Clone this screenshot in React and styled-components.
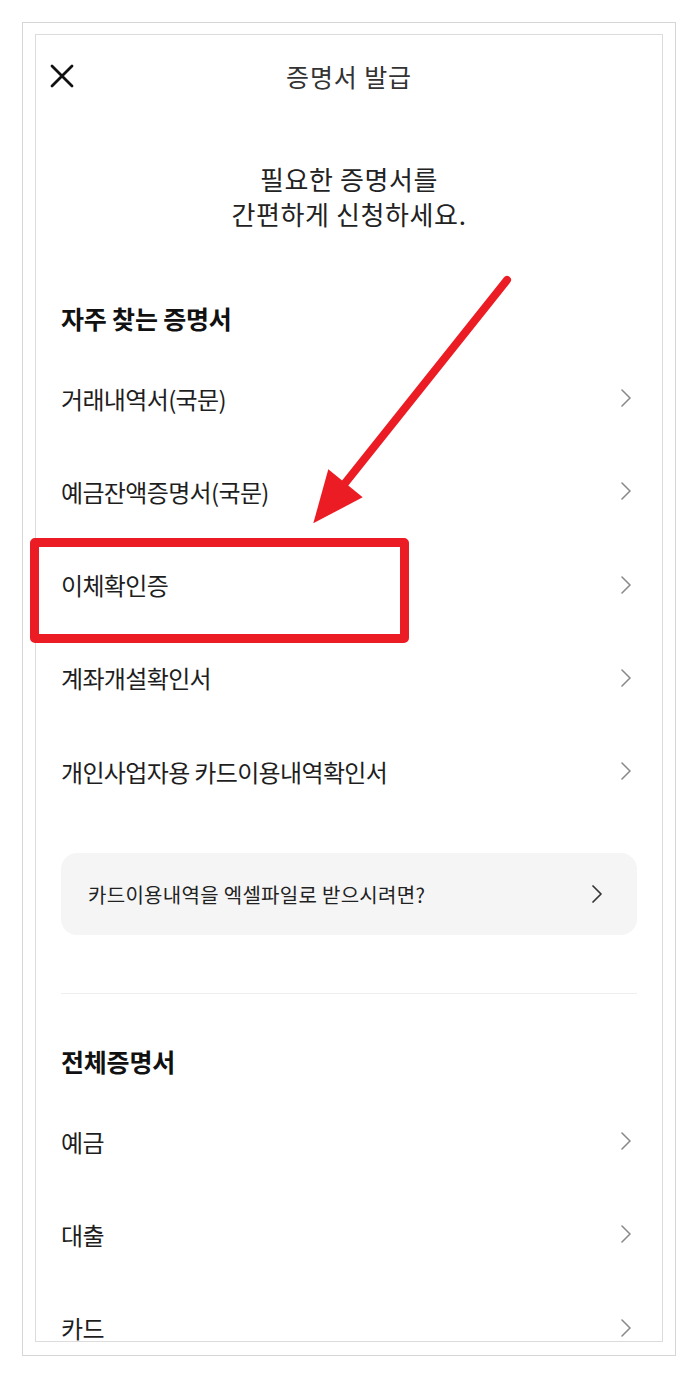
import React from "react";
import styled, { createGlobalStyle } from "styled-components";

const Global = createGlobalStyle`
  html, body { margin: 0; padding: 0; background: #fff; }
  body { font-family: "Noto Sans CJK KR", "Noto Sans", sans-serif; }
  * { box-sizing: border-box; }
`;

const Page = styled.div`
  position: relative;
  width: 698px;
  height: 1378px;
  padding: 22px 0 0 22px;
`;

const OuterFrame = styled.div`
  width: 654px;
  height: 1334px;
  border: 1px solid #d6d6d6;
  padding: 11px 12px 13px 12px;
`;

const Screen = styled.div`
  width: 100%;
  height: 1308px;
  border: 1px solid #dcdcdc;
  overflow: hidden;
  background: #fff;
`;

const Header = styled.header`
  display: grid;
  grid-template-columns: 1fr auto 1fr;
  align-items: center;
  height: 82px;
  padding-left: 14px;
  padding-right: 14px;
`;

const CloseButton = styled.button`
  justify-self: start;
  width: 24px;
  height: 24px;
  padding: 0;
  border: 0;
  background: none;
  display: flex;
  svg { display: block; }
`;

const Title = styled.h1`
  margin: 0;
  font-size: 25px;
  font-weight: 400;
  letter-spacing: 0.9px;
  color: #333;
  line-height: 34px;
`;

const Intro = styled.p`
  margin: 44px 0 0;
  text-align: center;
  font-size: 26px;
  line-height: 35px;
  letter-spacing: 0.6px;
  color: #222;
`;

const Body = styled.div`
  padding: 0 25px;
`;

const SectionTitle = styled.h2`
  margin: ${(p) => p.$top}px 0 0;
  font-size: 25px;
  line-height: 34px;
  font-weight: 700;
  letter-spacing: -0.2px;
  color: #111;
`;

const List = styled.ul`
  list-style: none;
  margin: 16.4px 0 0;
  padding: 0;
`;

const Row = styled.li`
  display: flex;
  align-items: center;
  justify-content: space-between;
  height: 93.25px;
  padding-right: 6px;
  font-size: 24px;
  letter-spacing: -0.65px;
  color: #1e1e1e;
`;

const Card = styled.div`
  margin-top: 35.4px;
  height: 82px;
  border-radius: 16px;
  background: #f5f5f5;
  display: flex;
  align-items: center;
  justify-content: space-between;
  padding: 0 35px 0 27px;
  font-size: 20px;
  letter-spacing: 0.3px;
  color: #222;
`;

const Divider = styled.hr`
  margin: 58px 0 0;
  border: 0;
  height: 1px;
  background: #efefef;
`;

const HighlightBox = styled.div`
  position: absolute;
  left: 30px;
  top: 538px;
  width: 379px;
  height: 105px;
  border: 9px solid #ec1c24;
  border-radius: 5px;
  pointer-events: none;
`;

const ArrowLayer = styled.svg`
  position: absolute;
  left: 0;
  top: 0;
  pointer-events: none;
`;

const Chevron = ({ color = "#8a8a8a", width = 1.6 }) => (
  <svg width="10" height="18" viewBox="0 0 10 18" fill="none">
    <path d="M1 1 L9 9 L1 17" stroke={color} strokeWidth={width} strokeLinecap="round" strokeLinejoin="round" />
  </svg>
);

const frequent = [
  "거래내역서(국문)",
  "예금잔액증명서(국문)",
  "이체확인증",
  "계좌개설확인서",
  "개인사업자용 카드이용내역확인서",
];

const all = ["예금", "대출", "카드"];

export default function App() {
  return (
    <>
      <Global />
      <Page>
        <OuterFrame>
          <Screen>
            <Header>
              <CloseButton aria-label="닫기">
                <svg width="24" height="24" viewBox="0 0 24 24" fill="none">
                  <path d="M2 2 L22 22 M22 2 L2 22" stroke="#111" strokeWidth="2.8" strokeLinecap="round" />
                </svg>
              </CloseButton>
              <Title>증명서 발급</Title>
              <span />
            </Header>
            <Intro>
              필요한 증명서를
              <br />
              간편하게 신청하세요.
            </Intro>
            <Body>
              <SectionTitle $top={70}>자주 찾는 증명서</SectionTitle>
              <List>
                {frequent.map((t) => (
                  <Row key={t}>
                    <span>{t}</span>
                    <Chevron />
                  </Row>
                ))}
              </List>
              <Card>
                <span>카드이용내역을 엑셀파일로 받으시려면?</span>
                <Chevron color="#333" width={1.7} />
              </Card>
              <Divider />
              <SectionTitle $top={50}>전체증명서</SectionTitle>
              <List>
                {all.map((t) => (
                  <Row key={t}>
                    <span>{t}</span>
                    <Chevron />
                  </Row>
                ))}
              </List>
            </Body>
          </Screen>
        </OuterFrame>
        <HighlightBox />
        <ArrowLayer width="698" height="700" viewBox="0 0 698 700">
          <line x1="507" y1="280" x2="342" y2="487" stroke="#ec1c24" strokeWidth="8" strokeLinecap="round" />
          <polygon points="328.3,469.3 362.7,497.3 313.3,523.3" fill="#ec1c24" />
        </ArrowLayer>
      </Page>
    </>
  );
}
